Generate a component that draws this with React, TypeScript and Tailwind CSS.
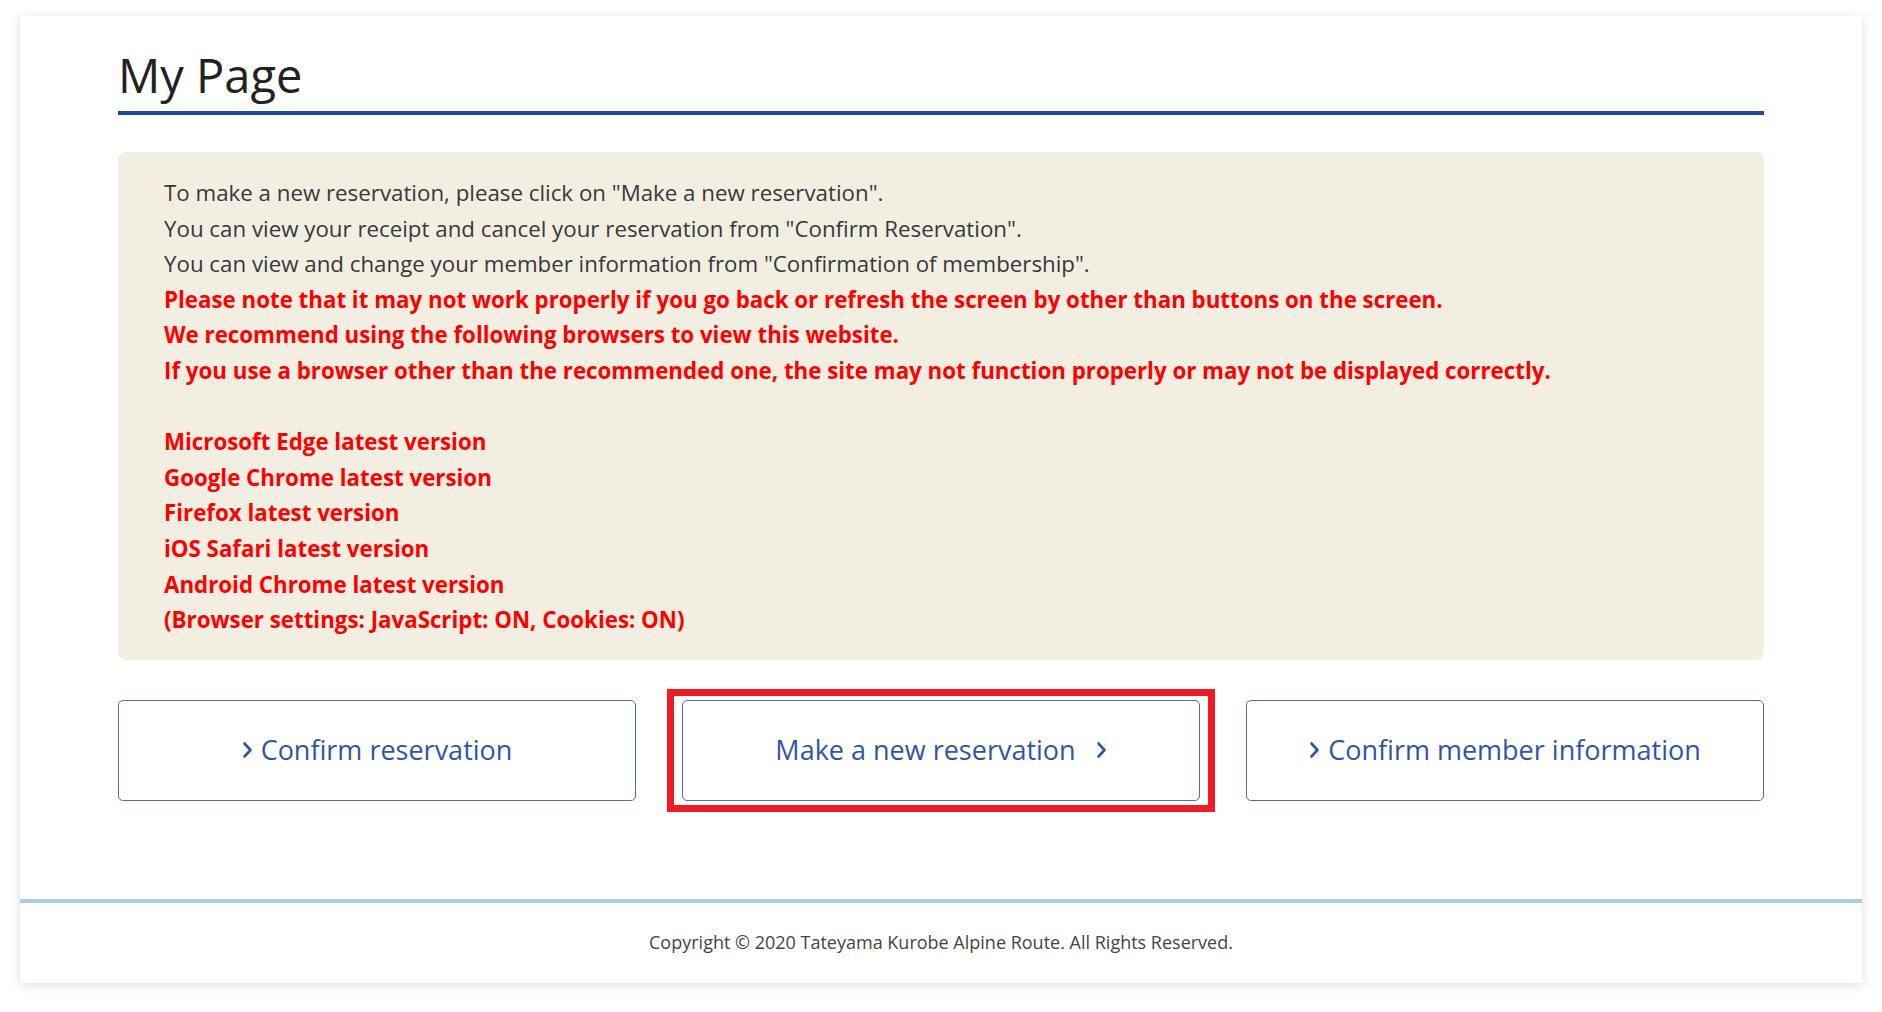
import React from "react"

const Chevron = () => (
  <svg width="11" height="18" viewBox="0 0 11 18" className="shrink-0" aria-hidden="true">
    <polyline points="2.5,2.5 8.5,9 2.5,15.5" fill="none" stroke="currentColor" strokeWidth="2.6" strokeLinecap="round" strokeLinejoin="round" />
  </svg>
)

const infoLines = [
  'To make a new reservation, please click on "Make a new reservation".',
  'You can view your receipt and cancel your reservation from "Confirm Reservation".',
  'You can view and change your member information from "Confirmation of membership".',
]

const warningLines = [
  "Please note that it may not work properly if you go back or refresh the screen by other than buttons on the screen.",
  "We recommend using the following browsers to view this website.",
  "If you use a browser other than the recommended one, the site may not function properly or may not be displayed correctly.",
]

const browsers = [
  "Microsoft Edge latest version",
  "Google Chrome latest version",
  "Firefox latest version",
  "iOS Safari latest version",
  "Android Chrome latest version",
  "(Browser settings: JavaScript: ON, Cookies: ON)",
]

export default function App() {
  return (
    <div className="min-h-screen bg-white pt-[16px] pl-[20px]" style={{ fontFamily: '"Open Sans", "Noto Sans", sans-serif' }}>
      <div className="w-[1842px] bg-white shadow-[0_2px_10px_rgba(0,0,0,0.14)]">
        <main className="px-[98px] pt-[31px] pb-[98px]">
          <h1 className="border-b-4 border-[#1d4aa0] pb-[8px] text-[47px] leading-[56px] text-[#222]">My Page</h1>

          <div className="mt-[37px] rounded-[8px] bg-[#f2efe2] pl-[46px] pr-[40px] pt-[23px] pb-[22px] text-[22.3px] leading-[35.6px]">
            {infoLines.map((line) => (
              <p key={line} className="text-[#383838]">{line}</p>
            ))}
            {warningLines.map((line) => (
              <p key={line} className="font-bold text-[#ff0000]">{line}</p>
            ))}
            <p className="h-[35.6px]" />
            {browsers.map((line) => (
              <p key={line} className="font-bold text-[#ff0000]">{line}</p>
            ))}
          </div>

          <div className="mt-[40px] grid grid-cols-3 gap-[46px]">
            <button className="flex h-[101px] items-center justify-center gap-[8px] rounded-[5px] border-[1.5px] border-[#4a6fc0] bg-white text-[27px] text-[#2f55a8]">
              <Chevron />
              <span>Confirm reservation</span>
            </button>
            <div className="relative">
              <button className="flex h-[101px] w-full items-center justify-center gap-[20px] rounded-[5px] border-[1.5px] border-[#4a6fc0] bg-white text-[27px] text-[#2f55a8]">
                <span>Make a new reservation</span>
                <Chevron />
              </button>
              <div className="pointer-events-none absolute -left-[15px] -right-[15px] -top-[11px] -bottom-[11px] border-[7px] border-[#ee1c25]" />
            </div>
            <button className="flex h-[101px] items-center justify-center gap-[8px] rounded-[5px] border-[1.5px] border-[#4a6fc0] bg-white text-[27px] text-[#2f55a8]">
              <Chevron />
              <span>Confirm member information</span>
            </button>
          </div>
        </main>

        <footer className="flex h-[84px] items-center justify-center border-t-4 border-[#a6cfe6] text-[18px] text-[#444]">
          Copyright © 2020 Tateyama Kurobe Alpine Route. All Rights Reserved.
        </footer>
      </div>
    </div>
  )
}
